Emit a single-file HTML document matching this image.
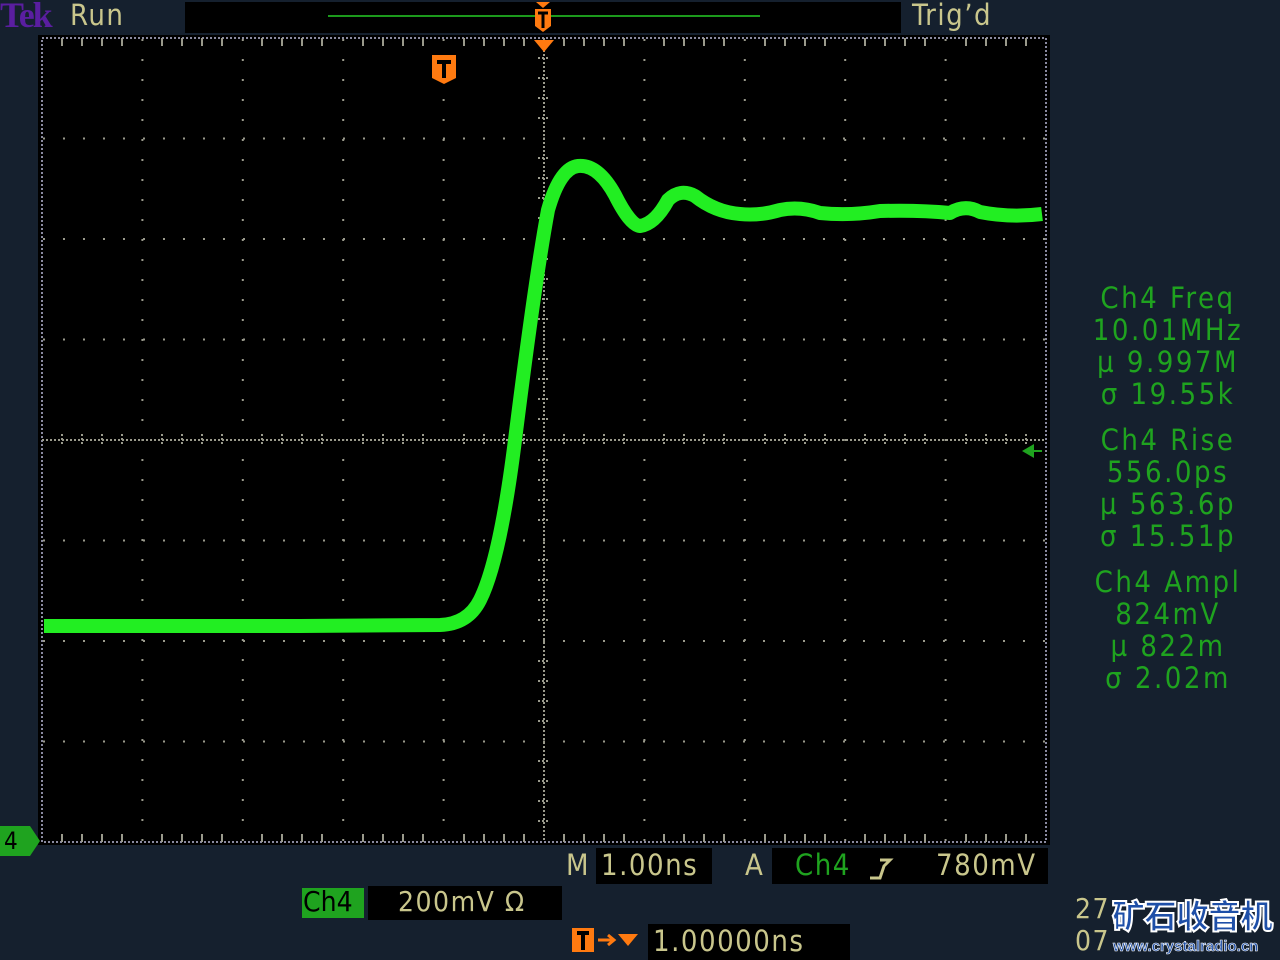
<!DOCTYPE html>
<html><head><meta charset="utf-8"><style>
body{margin:0;width:1280px;height:960px;background:#15202e;overflow:hidden;position:relative;font-family:"DejaVu Sans Condensed","DejaVu Sans","Liberation Sans",sans-serif}
.t{position:absolute;white-space:nowrap;letter-spacing:1.5px}
.box{position:absolute;background:#000}
.y{color:#c9c68c}
.g{color:#1fa31f}
.meas{position:absolute;left:1078px;width:180px;text-align:center;color:#1fa31f;font-size:29px;line-height:32px;letter-spacing:2.5px}
</style></head><body>
<div class="t" style="left:0;top:-6px;font-family:'Liberation Serif',serif;font-size:36px;color:#5a1ea0;font-weight:bold;letter-spacing:-2px">Tek</div>
<div class="t y" style="left:70px;top:-2px;font-size:29px">Run</div>
<div class="box" style="left:185px;top:2px;width:716px;height:31px"></div>
<div style="position:absolute;left:328px;top:15px;width:432px;height:2px;background:#1c9a1c"></div>
<div class="t y" style="left:912px;top:-2px;font-size:29px">Trig’d</div>
<div class="box" style="left:38px;top:35px;width:1012px;height:810px;background:#000"></div>
<svg style="position:absolute;left:0;top:0" width="1280" height="960">
<g stroke="#9a9a8c" stroke-width="2" fill="none">
<g stroke-dasharray="2 18" stroke-dashoffset="-1">
<path d="M142.4 38V842M242.8 38V842M343.2 38V842M443.6 38V842M644.4 38V842M744.8 38V842M845.2 38V842M945.6 38V842"/>
<path d="M42 138.5H1046M42 239H1046M42 339.5H1046M42 540.5H1046M42 641H1046M42 741.5H1046"/>
</g>
<rect x="42" y="38" width="1004" height="804" stroke-dasharray="2 2" stroke="#8a8aa0"/>
<path d="M544 38V842M42 440H1046" stroke-dasharray="2 2"/>
<path d="M62 434V446M82 434V446M102 434V446M122 434V446M162 434V446M182 434V446M202 434V446M222 434V446M262 434V446M282 434V446M302 434V446M322 434V446M363 434V446M383 434V446M403 434V446M423 434V446M464 434V446M484 434V446M504 434V446M524 434V446M564 434V446M584 434V446M604 434V446M624 434V446M664 434V446M684 434V446M704 434V446M724 434V446M765 434V446M785 434V446M805 434V446M825 434V446M865 434V446M885 434V446M905 434V446M925 434V446M966 434V446M986 434V446M1006 434V446M1026 434V446" stroke-dasharray="2 2"/>
<path d="M538 58H550M538 78H550M538 98H550M538 118H550M538 158H550M538 178H550M538 198H550M538 218H550M538 259H550M538 279H550M538 299H550M538 319H550M538 359H550M538 379H550M538 399H550M538 419H550M538 460H550M538 480H550M538 500H550M538 520H550M538 560H550M538 580H550M538 600H550M538 620H550M538 661H550M538 681H550M538 701H550M538 721H550M538 761H550M538 781H550M538 801H550M538 821H550" stroke-dasharray="2 2"/>
<path d="M62 38V46M82 38V46M102 38V46M122 38V46M162 38V46M182 38V46M202 38V46M222 38V46M262 38V46M282 38V46M302 38V46M322 38V46M363 38V46M383 38V46M403 38V46M423 38V46M464 38V46M484 38V46M504 38V46M524 38V46M564 38V46M584 38V46M604 38V46M624 38V46M664 38V46M684 38V46M704 38V46M724 38V46M765 38V46M785 38V46M805 38V46M825 38V46M865 38V46M885 38V46M905 38V46M925 38V46M966 38V46M986 38V46M1006 38V46M1026 38V46"/>
<path d="M62 834V842M82 834V842M102 834V842M122 834V842M162 834V842M182 834V842M202 834V842M222 834V842M262 834V842M282 834V842M302 834V842M322 834V842M363 834V842M383 834V842M403 834V842M423 834V842M464 834V842M484 834V842M504 834V842M524 834V842M564 834V842M584 834V842M604 834V842M624 834V842M664 834V842M684 834V842M704 834V842M724 834V842M765 834V842M785 834V842M805 834V842M825 834V842M865 834V842M885 834V842M905 834V842M925 834V842M966 834V842M986 834V842M1006 834V842M1026 834V842"/>
</g>
<path d="M44 626 L300 626 L440 625 Q468 624 480 600 Q500 560 515 440 Q535 280 548 210 Q560 168 578 166 Q598 164 615 195 Q630 225 640 226 Q655 224 668 200 Q680 188 695 196 Q715 212 740 214 Q760 216 780 210 Q800 206 820 213 Q850 216 880 211 Q920 210 950 213 Q965 204 980 212 Q1010 218 1042 214" stroke="#22ee22" stroke-width="14" fill="none" stroke-linejoin="round"/>
<path d="M1022 451 L1034 444 L1034 458Z" fill="#1fa31f"/><path d="M1034 451H1042" stroke="#1fa31f" stroke-width="2"/>
<g fill="#ff7a10">
<path d="M534 40H554L544 52Z"/>
<path d="M536 2H550L543 8Z"/>
<path d="M535 9H551V26L543 32L535 26Z"/>
<path d="M432 55H456V78L444 84L432 78Z"/>
</g>
<path d="M538 13H548M543 13V28" stroke="#000" stroke-width="3"/>
<path d="M437 62H451M444 62V78" stroke="#000" stroke-width="4"/>
<path d="M0 826H30L40 841L30 856H0Z" fill="#1fa31f"/>
<path d="M572 928H594V952H572Z" fill="#ff7a10"/>
<path d="M577 933H589M583 933V950" stroke="#000" stroke-width="4"/>
<path d="M598 940H612M608 935L614 940 608 945" stroke="#ff7a10" stroke-width="3" fill="none"/>
<path d="M618 934H638L628 946Z" fill="#ff7a10"/>
</svg>
<div class="t" style="left:4px;top:827px;font-size:24px;color:#000">4</div>
<div class="t y" style="left:566px;top:848px;font-size:29px">M</div>
<div class="box" style="left:596px;top:848px;width:116px;height:36px"></div>
<div class="t y" style="left:601px;top:848px;font-size:29px">1.00ns</div>
<div class="t y" style="left:745px;top:848px;font-size:29px">A</div>
<div class="box" style="left:772px;top:848px;width:276px;height:36px"></div>
<div class="t g" style="left:795px;top:848px;font-size:29px">Ch4</div>
<svg style="position:absolute;left:870px;top:852px" width="30" height="30"><path d="M10 8H20L14 14 10 26H0" stroke="#c9c68c" stroke-width="3" fill="none"/></svg>
<div class="t y" style="left:936px;top:848px;font-size:29px">780mV</div>
<div style="position:absolute;left:302px;top:888px;width:62px;height:30px;background:#1fa31f"></div>
<div class="t" style="left:303px;top:885px;font-size:28px;color:#000;letter-spacing:0">Ch4</div>
<div class="box" style="left:368px;top:886px;width:194px;height:34px"></div>
<div class="t y" style="left:398px;top:885px;font-size:28px">200mV Ω</div>
<div class="box" style="left:648px;top:924px;width:202px;height:36px"></div>
<div class="t y" style="left:653px;top:924px;font-size:29px">1.00000ns</div>
<div class="t y" style="left:1075px;top:892px;font-size:28px">27</div>
<div class="t y" style="left:1075px;top:924px;font-size:28px">07</div>
<div class="t" style="left:1112px;top:890px;font-family:'Noto Sans CJK SC',sans-serif;font-weight:900;font-size:33px;color:#1e4fa8;-webkit-text-stroke:2px #fff;letter-spacing:-1px">矿石收音机</div>
<div class="t" style="left:1113px;top:938px;font-family:'Liberation Sans',sans-serif;font-weight:bold;font-size:15px;color:#1e4fa8;-webkit-text-stroke:0.6px #fff;letter-spacing:0">www.crystalradio.cn</div>
<div class="meas" style="top:282px">Ch4 Freq<br>10.01MHz<br>µ 9.997M<br>σ 19.55k</div>
<div class="meas" style="top:424px">Ch4 Rise<br>556.0ps<br>µ 563.6p<br>σ 15.51p</div>
<div class="meas" style="top:566px">Ch4 Ampl<br>824mV<br>µ 822m<br>σ 2.02m</div>
</body></html>
